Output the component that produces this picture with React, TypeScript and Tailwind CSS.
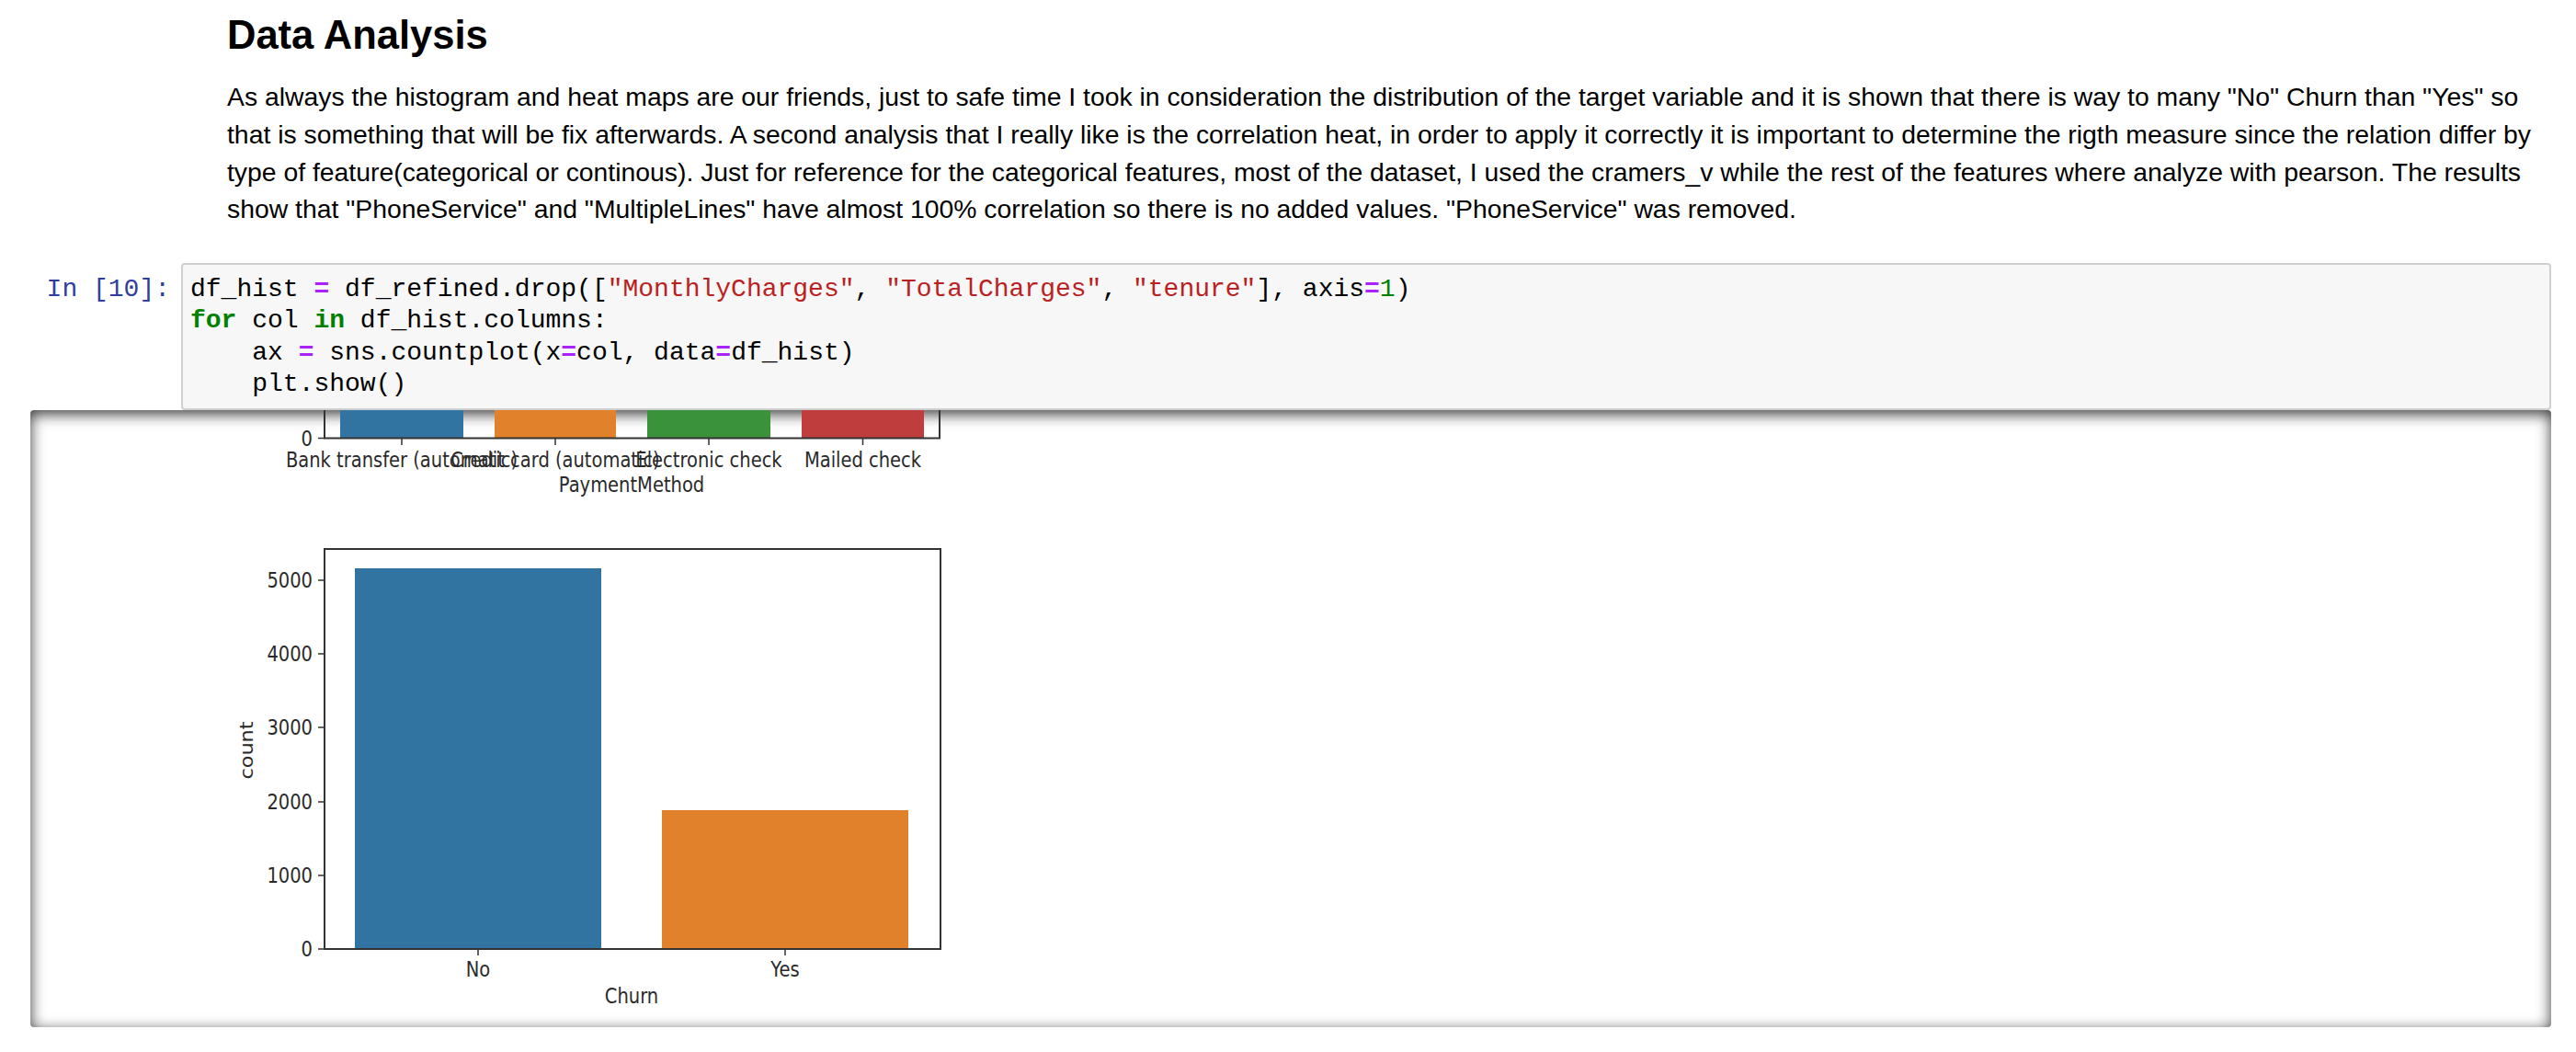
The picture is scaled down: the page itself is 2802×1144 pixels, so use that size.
import React from 'react';

const para =
  'As always the histogram and heat maps are our friends, just to safe time I took in consideration the distribution of the target variable and it is shown that there is way to many "No" Churn than "Yes" so that is something that will be fix afterwards. A second analysis that I really like is the correlation heat, in order to apply it correctly it is important to determine the rigth measure since the relation differ by type of feature(categorical or continous). Just for reference for the categorical features, most of the dataset, I used the cramers_v while the rest of the features where analyze with pearson. The results show that "PhoneService" and "MultipleLines" have almost 100% correlation so there is no added values. "PhoneService" was removed.';

const op = 'text-[#aa22ff] font-bold';
const str = 'text-[#ba2121]';
const kw = 'text-[#008000] font-bold';

function CodeCell() {
  return (
    <div className="mt-[38px] flex font-['Liberation_Mono',monospace] text-[28px] leading-[34.5px]">
      <div className="w-[197px] shrink-0 pt-[11.5px] pr-[12px] text-right text-[#303f9f]">In [10]:</div>
      <div className="mr-[27px] flex-1 rounded-[4px] border-2 border-[#cfcfcf] bg-[#f7f7f7] pt-[9.5px] pb-[8.5px] pl-[8px] text-black whitespace-pre">
        <div>
          df_hist <span className={op}>=</span> df_refined.drop([<span className={str}>"MonthlyCharges"</span>, <span className={str}>"TotalCharges"</span>, <span className={str}>"tenure"</span>], axis<span className={op}>=</span><span className="text-[#008000]">1</span>)
        </div>
        <div>
          <span className={kw}>for</span> col <span className={kw}>in</span> df_hist.columns:
        </div>
        <div>
          {'    '}ax <span className={op}>=</span> sns.countplot(x<span className={op}>=</span>col, data<span className={op}>=</span>df_hist)
        </div>
        <div>{'    '}plt.show()</div>
      </div>
    </div>
  );
}

const axis = '#333333';
const ink = '#2a2a2a';

// matplotlib label, slightly stretched vertically like the scaled figure
function T({ x, y, anchor = 'middle', rotate, children }: { x: number; y: number; anchor?: 'start' | 'middle' | 'end'; rotate?: boolean; children: React.ReactNode }) {
  const tf = rotate
    ? `rotate(-90 ${x} ${y}) translate(${x} ${y}) scale(1.15 1) translate(${-x} ${-y})`
    : `translate(${x} ${y}) scale(1 1.15) translate(${-x} ${-y})`;
  return (
    <text
      x={x}
      y={y}
      textAnchor={anchor}
      dominantBaseline="central"
      transform={tf}
      style={{ fontFamily: '"DejaVu Sans", sans-serif', fontSize: 19.5, fill: ink }}
    >
      {children}
    </text>
  );
}

function Charts() {
  const prev = [
    { x: 370, w: 134, c: '#3274a1', label: 'Bank transfer (automatic)' },
    { x: 538, w: 132, c: '#e1812c', label: 'Credit card (automatic)' },
    { x: 704, w: 134, c: '#3a923a', label: 'Electronic check' },
    { x: 872, w: 133, c: '#c03d3e', label: 'Mailed check' },
  ];
  const yTicks = [
    { v: '5000', y: 633 },
    { v: '4000', y: 713 },
    { v: '3000', y: 793 },
    { v: '2000', y: 874 },
    { v: '1000', y: 954 },
    { v: '0', y: 1034 },
  ];
  return (
    <svg width="2742" height="671" viewBox="33 448 2742 671" className="block">
      {/* tail of the PaymentMethod plot */}
      {prev.map((b) => (
        <rect key={b.label} x={b.x} y={440} width={b.w} height={38.5} fill={b.c} />
      ))}
      <line x1={353} y1={440} x2={353} y2={479} stroke={axis} strokeWidth={2} />
      <line x1={1022} y1={440} x2={1022} y2={479} stroke={axis} strokeWidth={2} />
      <line x1={352} y1={478.5} x2={1023} y2={478.5} stroke={axis} strokeWidth={2} />
      <line x1={346} y1={478.5} x2={353} y2={478.5} stroke={axis} strokeWidth={1.5} />
      <T x={340} y={479} anchor="end">0</T>
      {prev.map((b) => (
        <g key={b.label + 't'}>
          <line x1={b.x + b.w / 2} y1={479} x2={b.x + b.w / 2} y2={486} stroke={axis} strokeWidth={1.5} />
          <T x={b.x + b.w / 2} y={502}>{b.label}</T>
        </g>
      ))}
      <T x={687} y={529}>PaymentMethod</T>

      {/* Churn plot */}
      <rect x={386} y={620} width={268} height={414} fill="#3274a1" />
      <rect x={720} y={883} width={268} height={151} fill="#e1812c" />
      <rect x={353} y={599} width={670} height={435} fill="none" stroke={axis} strokeWidth={2} />
      {yTicks.map((t) => (
        <g key={t.v}>
          <line x1={346} y1={t.y} x2={353} y2={t.y} stroke={axis} strokeWidth={1.5} />
          <T x={340} y={t.y} anchor="end">{t.v}</T>
        </g>
      ))}
      <T x={268} y={818} rotate>count</T>
      <line x1={520} y1={1034} x2={520} y2={1041} stroke={axis} strokeWidth={1.5} />
      <line x1={854} y1={1034} x2={854} y2={1041} stroke={axis} strokeWidth={1.5} />
      <T x={520} y={1056}>No</T>
      <T x={854} y={1056}>Yes</T>
      <T x={687} y={1085}>Churn</T>
    </svg>
  );
}

export default function App() {
  return (
    <div className="w-[2802px] h-[1144px] overflow-hidden bg-white text-black">
      <div className="pl-[247px] pr-[27px] pt-[12px] font-['Liberation_Sans',Arial,sans-serif]">
        <h2 className="text-[43.5px] leading-[1.2] font-bold">Data Analysis</h2>
        <p className="mt-[21px] text-[28.35px] leading-[40.7px]">{para}</p>
      </div>
      <CodeCell />
      <div className="ml-[33px] mr-[27px] h-[671px] overflow-hidden rounded-[4px] shadow-[inset_0_4px_16px_rgba(0,0,0,0.8)]">
        <Charts />
      </div>
    </div>
  );
}
